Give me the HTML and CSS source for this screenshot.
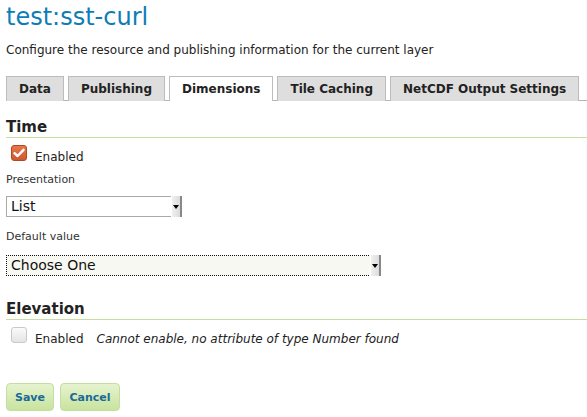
FILE: index.html
```html
<!DOCTYPE html>
<html>
<head>
<meta charset="utf-8">
<link rel="stylesheet" href="styles.css">
</head>
<body>
<div class="page">
  <h1 class="title">test:sst-curl</h1>
  <p class="desc">Configure the resource and publishing information for the current layer</p>
  <ul class="tabs">
    <li class="tab">Data</li>
    <li class="tab">Publishing</li>
    <li class="tab active">Dimensions</li>
    <li class="tab">Tile Caching</li>
    <li class="tab">NetCDF Output Settings</li>
  </ul>

  <section class="dim">
    <h2 class="dim-title">Time</h2>
    <div class="check-row">
      <span class="cbox checked">
        <svg width="12" height="10" viewBox="0 0 12 10"><path d="M1.5 5.2 L4.6 8 L10.5 1.8" fill="none" stroke="#fff" stroke-width="2.4" stroke-linecap="round" stroke-linejoin="round"/></svg>
      </span>
      <span class="check-label">Enabled</span>
    </div>
    <div class="field-label">Presentation</div>
    <div class="sel sel-short"><span class="sel-text">List</span><span class="sel-btn"><span class="tri"></span></span></div>
    <div class="field-label second">Default value</div>
    <div class="sel sel-long focus"><span class="sel-text">Choose One</span><span class="sel-btn"><span class="tri"></span></span></div>
  </section>

  <section class="dim elev">
    <h2 class="dim-title">Elevation</h2>
    <div class="check-row">
      <span class="cbox"></span>
      <span class="check-label">Enabled</span>
      <span class="note">Cannot enable, no attribute of type Number found</span>
    </div>
  </section>

  <div class="buttons">
    <button class="btn">Save</button>
    <button class="btn">Cancel</button>
  </div>
</div>
</body>
</html>
```

FILE: styles.css
```css
html, body {
  margin: 0;
  padding: 0;
  background: #fff;
}
body {
  font-family: "DejaVu Sans", sans-serif;
  color: #222;
}
.page {
  padding: 0 0 0 6px;
}
.title {
  margin: 3px 0 0 0;
  font-size: 24px;
  line-height: 28px;
  font-weight: normal;
  color: #0e7db6;
}
.desc {
  margin: 11px 0 0 0;
  font-size: 12px;
  line-height: 16px;
  color: #222;
}
.tabs {
  list-style: none;
  margin: 18px 0 0 0;
  padding: 0;
  display: flex;
  gap: 4px;
  border-bottom: 1px solid #b4b4b4;
  height: 24px;
}
.tab {
  box-sizing: border-box;
  height: 25px;
  padding: 0 12px;
  background: #dedede;
  border: 1px solid #bcbcbc;
  border-bottom: none;
  font-weight: bold;
  font-size: 12px;
  line-height: 24px;
  color: #222;
  white-space: nowrap;
}
.tab.active {
  background: #fff;
}
.dim-title {
  margin: 17px 0 0 0;
  font-size: 15px;
  line-height: 18px;
  font-weight: bold;
  color: #222;
  border-bottom: 1px solid #c6dea0;
  padding-bottom: 1px;
}
.check-row {
  display: flex;
  align-items: center;
  margin-top: 6px;
  padding-left: 5px;
  font-size: 12px;
  height: 17px;
}
.cbox {
  box-sizing: border-box;
  width: 16px;
  height: 16px;
  border-radius: 3px;
  border: 1px solid #c9c9c9;
  background: linear-gradient(#fafafa, #e4e4e4);
  display: flex;
  align-items: center;
  justify-content: center;
}
.cbox.checked {
  border-color: #b14a22;
  background: linear-gradient(#e9774c, #cc5a2e);
}
.check-label {
  margin-left: 8px;
  position: relative;
  top: 4px;
}
.note {
  margin-left: 13px;
  font-style: italic;
  position: relative;
  top: 4px;
}
.field-label {
  font-size: 11px;
  line-height: 14px;
  margin-top: 12px;
  color: #333;
}
.field-label.second {
  margin-top: 13px;
}
.sel {
  box-sizing: border-box;
  display: flex;
  height: 21px;
  margin-top: 9px;
  border: 1px solid #aaa;
  background: #fff;
}
.sel-short { width: 176px; }
.sel-long {
  width: 375px;
  margin-top: 11px;
}
.sel.focus {
  border: 1px dotted #111;
  background: #f8f8f2;
}
.sel-text {
  flex: 1;
  font-size: 14px;
  line-height: 19px;
  padding-left: 4px;
  color: #111;
}
.sel-btn {
  width: 8px;
  background: linear-gradient(90deg, #f0f0f0, #dcdcdc);
  border-right: 2px solid #888;
  display: flex;
  align-items: center;
  justify-content: center;
  margin: -1px -1px -1px 0;
  border-left: 1px solid #fff;
}
.tri {
  width: 0;
  height: 0;
  border-left: 3px solid transparent;
  border-right: 3px solid transparent;
  border-top: 4px solid #000;
}
.elev .dim-title {
  margin-top: 24px;
}
.elev .check-row {
  margin-top: 6px;
}
.buttons {
  display: flex;
  gap: 6px;
  margin-top: 40px;
}
.btn {
  box-sizing: border-box;
  height: 28px;
  padding: 0 8px;
  border: 1px solid #c4dea0;
  border-radius: 4px;
  background: linear-gradient(#e6f3cf, #c8e39e);
  font-family: "DejaVu Sans", sans-serif;
  font-weight: bold;
  font-size: 11px;
  color: #1a6a99;
}
.btn:first-child {
  width: 48px;
}
.btn:last-child {
  width: 60px;
}
```
